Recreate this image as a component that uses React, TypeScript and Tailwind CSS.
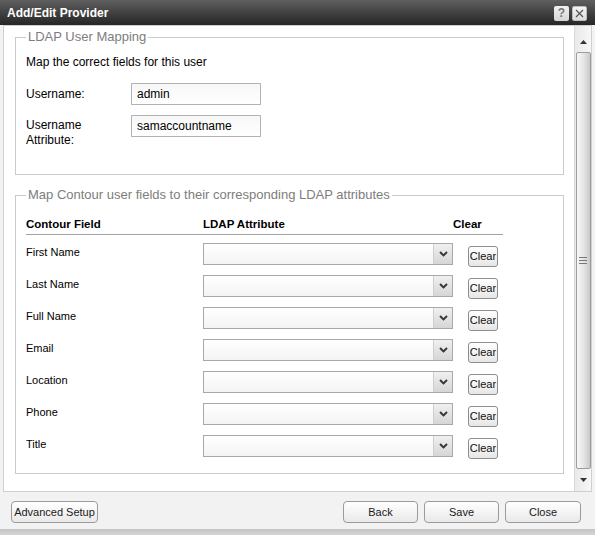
const FIELDS = ["First Name", "Last Name", "Full Name", "Email", "Location", "Phone", "Title"]

const FONT = { fontFamily: '"Liberation Sans", Arial, sans-serif' }

const ChevronDown = () => (
  <svg width="9" height="6" viewBox="0 0 9 6">
    <path d="M1 1 L4.5 4.5 L8 1" fill="none" stroke="#333" strokeWidth="1.8" />
  </svg>
)

const SelectBox = () => (
  <div className="w-[250px] h-[22px] flex border border-[#a9a9a9] bg-gradient-to-b from-white to-[#f4f4f4]">
    <div className="flex-1" />
    <div className="w-[19px] h-full flex items-center justify-center border-l border-[#cfcfcf] bg-gradient-to-b from-[#f0f0f0] to-[#d6d6d6]">
      <ChevronDown />
    </div>
  </div>
)

const DialogButton = ({ label, className }: { label: string; className: string }) => (
  <button className={`h-[22px] rounded-[4px] border border-[#9b9b9b] bg-gradient-to-b from-white to-[#e9e9e9] text-[11px] text-[#1a1a1a] leading-none ${className}`}>
    {label}
  </button>
)

const Scrollbar = () => (
  <div className="w-[17px] shrink-0 flex flex-col items-center border-l border-[#d9d9d9] bg-gradient-to-r from-[#e9e9e9] to-[#f7f7f7]">
    <div className="h-[26px] w-full flex items-center justify-center pt-[6px]">
      <svg width="7" height="4" viewBox="0 0 7 4"><path d="M0 4 L3.5 0 L7 4 Z" fill="#333" /></svg>
    </div>
    <div className="w-[15px] flex-1 rounded-[2px] border border-[#9d9d9d] bg-gradient-to-r from-[#f8f8f8] via-[#e6e6e6] to-[#c9c9c9] flex flex-col items-center justify-center gap-[2px]">
      <div className="w-[8px] h-[1px] bg-[#777]" />
      <div className="w-[8px] h-[1px] bg-[#777]" />
      <div className="w-[8px] h-[1px] bg-[#777]" />
    </div>
    <div className="h-[22px] w-full flex items-center justify-center">
      <svg width="7" height="4" viewBox="0 0 7 4"><path d="M0 0 L3.5 4 L7 0 Z" fill="#333" /></svg>
    </div>
  </div>
)

const App = () => {
  return (
    <div className="w-[595px] h-[535px] flex flex-col bg-[#f2f2f2] overflow-hidden text-black" style={FONT}>
      {/* title bar */}
      <div className="h-[25px] shrink-0 flex items-center justify-between pl-[7px] pr-[8px] bg-gradient-to-b from-[#606060] to-[#262626]">
        <span className="text-white font-bold text-[12px] leading-none">Add/Edit Provider</span>
        <div className="flex gap-[3px] pt-[1px]">
          <div className="w-[15px] h-[15px] flex items-center justify-center rounded-[2px] bg-gradient-to-b from-[#f2f2f2] to-[#d4d4d4] text-[#777] font-bold text-[12px] leading-none">?</div>
          <div className="w-[15px] h-[15px] flex items-center justify-center rounded-[2px] border border-[#bbb] bg-gradient-to-b from-[#f4f4f4] to-[#dcdcdc]">
            <svg width="9" height="9" viewBox="0 0 9 9"><path d="M1 1 L8 8 M8 1 L1 8" stroke="#555" strokeWidth="1.2" /></svg>
          </div>
        </div>
      </div>

      {/* content */}
      <div className="h-[467px] shrink-0 mx-[3px] flex border border-[#cfcfcf] bg-white">
        <div className="flex-1 overflow-hidden pt-[3px] pl-[11px] pr-[10px]">
          <fieldset className="border border-[#cacaca] pl-[10px] pb-[26px]">
            <legend className="px-[2px] text-[13px] leading-[16px] text-[#7d7d7d]">LDAP User Mapping</legend>
            <p className="mt-[9px] text-[12px] leading-[16px]">Map the correct fields for this user</p>
            <div className="mt-[13px] flex items-center">
              <span className="w-[105px] text-[12px]">Username:</span>
              <div className="w-[130px] h-[22px] flex items-center pl-[5px] border border-[#b3b3b3] bg-gradient-to-b from-[#f7f7f7] to-white text-[12px]">admin</div>
            </div>
            <div className="mt-[10px] flex items-start">
              <span className="w-[105px] mt-[3px] text-[12px] leading-[15px]">Username<br />Attribute:</span>
              <div className="w-[130px] h-[22px] flex items-center pl-[5px] border border-[#b3b3b3] bg-gradient-to-b from-[#f7f7f7] to-white text-[12px]">samaccountname</div>
            </div>
          </fieldset>

          <fieldset className="mt-[12px] border border-[#cacaca] pl-[10px] pb-[6px]">
            <legend className="px-[2px] text-[13px] leading-[16px] text-[#7d7d7d]">Map Contour user fields to their corresponding LDAP attributes</legend>
            <div className="mt-[14px] w-[477px] flex pb-[3px] border-b border-[#a3a3a3] text-[11.5px] leading-[14px] font-bold">
              <span className="w-[177px]">Contour Field</span>
              <span className="w-[250px]">LDAP Attribute</span>
              <span>Clear</span>
            </div>
            <div className="mt-[8px] flex flex-col">
              {FIELDS.map((f) => (
                <div key={f} className="h-[32px] flex items-start">
                  <span className="w-[177px] pt-[2px] text-[11px] leading-[14px]">{f}</span>
                  <SelectBox />
                  <button className="ml-[15px] mt-[3px] w-[30px] h-[21px] rounded-[3px] border border-[#8e8e8e] bg-gradient-to-b from-white to-[#e6e6e6] text-[11px] leading-none text-[#111]">Clear</button>
                </div>
              ))}
            </div>
          </fieldset>
        </div>
        <Scrollbar />
      </div>

      {/* footer */}
      <div className="h-[37px] shrink-0 flex items-start pt-[9px] pl-[11px] pr-[14px]">
        <DialogButton label="Advanced Setup" className="w-[87px]" />
        <div className="flex-1" />
        <div className="flex gap-[6px]">
          <DialogButton label="Back" className="w-[75px]" />
          <DialogButton label="Save" className="w-[75px]" />
          <DialogButton label="Close" className="w-[76px]" />
        </div>
      </div>
      <div className="flex-1 bg-gradient-to-b from-[#c4c4c4] to-[#d6d6d6]" />
    </div>
  )
}

export default App
